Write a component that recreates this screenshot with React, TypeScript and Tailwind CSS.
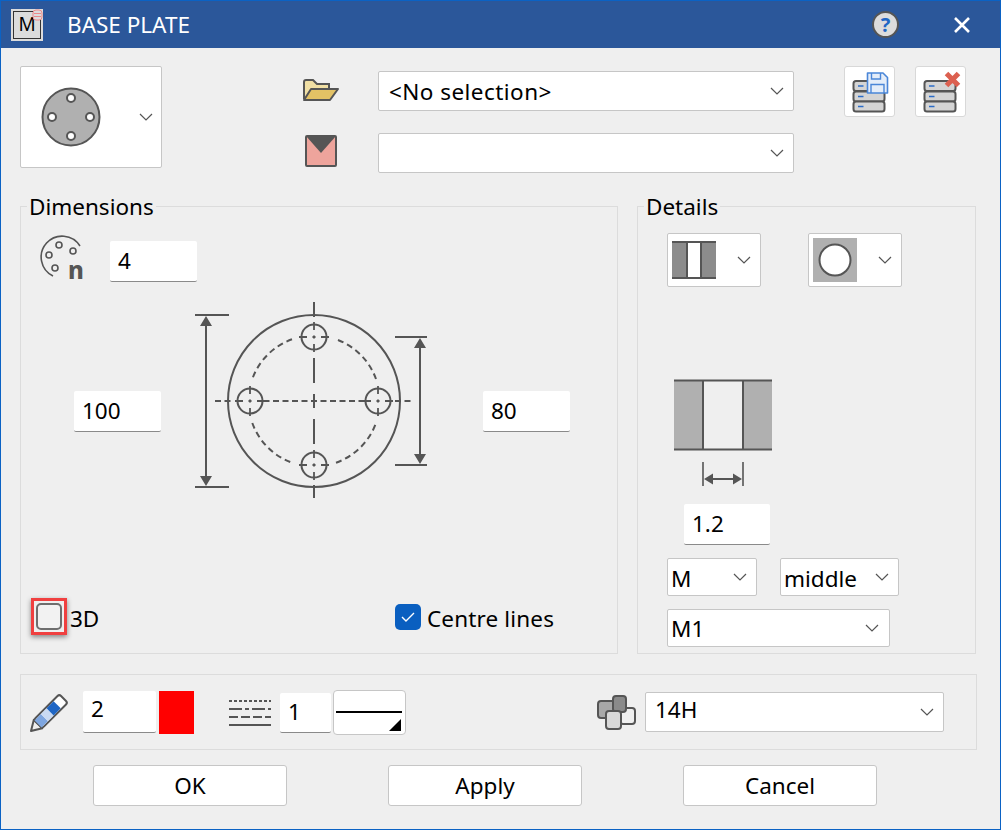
import React from "react";

const font = "font-['Noto_Sans','Open_Sans',sans-serif]";

function Chevron({ className = "" }: { className?: string }) {
  return (
    <svg width="14" height="8" viewBox="0 0 14 8" className={className}>
      <path d="M1 1 L7 7 L13 1" fill="none" stroke="#555" strokeWidth="1.2" />
    </svg>
  );
}

function Field({ value, className = "" }: { value: string; className?: string }) {
  return (
    <div className={`flex shrink-0 items-center rounded-[2px] border-b border-b-[#8a8a8a] bg-white pl-[8px] text-black ${className}`}>
      {value}
    </div>
  );
}

function Combo({
  children,
  className = "",
}: {
  children?: React.ReactNode;
  className?: string;
}) {
  return (
    <div className={`flex shrink-0 items-center justify-between rounded-[2px] border border-[#c6c6c6] bg-white text-black ${className}`}>
      {children}
    </div>
  );
}

function Panel({
  title,
  className = "",
  children,
}: {
  title?: string;
  className?: string;
  children: React.ReactNode;
}) {
  return (
    <div className={`relative shrink-0 border border-[#dcdcdc] ${className}`}>
      {title && (
        <span className="absolute left-[6px] top-[-14px] bg-[#efefef] px-0.5 leading-[28px] text-black">
          {title}
        </span>
      )}
      {children}
    </div>
  );
}

function PlateIcon() {
  return (
    <svg width="60" height="60" viewBox="0 0 60 60">
      <circle cx="30" cy="30" r="28.5" fill="#b0b0b0" stroke="#555" strokeWidth="2" />
      {[[30, 11], [11, 30], [49, 30], [30, 49]].map(([x, y]) => (
        <circle key={`${x}-${y}`} cx={x} cy={y} r="4" fill="#fff" stroke="#555" strokeWidth="2" />
      ))}
    </svg>
  );
}

function StackIcon({ children }: { children: React.ReactNode }) {
  return (
    <svg width="49" height="49" viewBox="0 0 49 49">
      {[14, 24.5, 34.5].map((y) => (
        <g key={y}>
          <rect x="8.5" y={y} width="31" height="10" rx="2.5" fill="#d4d4d4" stroke="#555" strokeWidth="2" />
          <path d={`M13 ${y + 5} H18.5`} stroke="#2b6cc8" strokeWidth="1.5" />
        </g>
      ))}
      {children}
    </svg>
  );
}

function Drawing() {
  const holes = [[134, 42], [70, 106], [198, 106], [134, 170]];
  return (
    <svg width="270" height="210" viewBox="0 0 270 210" className="shrink-0">
      <g fill="none" stroke="#555" strokeWidth="2">
        <circle cx="134" cy="106" r="86" />
        <path
          d="M112 44.3 A65.5 65.5 0 0 0 72.3 84 M196 84 A65.5 65.5 0 0 0 156 44.3 M72.3 128 A65.5 65.5 0 0 0 112 167.7 M156 167.7 A65.5 65.5 0 0 0 196 128"
          strokeDasharray="6 4"
        />
        {holes.map(([x, y]) => (
          <g key={`${x}-${y}`}>
            <circle cx={x} cy={y} r="12.5" />
            <path
              d={`M${x - 15} ${y} H${x + 15} M${x} ${y - 15} V${y + 15}`}
              strokeWidth="1.8"
              strokeDasharray="8 5.5 3 5.5 8"
            />
          </g>
        ))}
        <path d="M35 106 H53 M83.5 106 H184.5 M215 106 H233" strokeDasharray="6 3.5" />
        <path d="M134 7 V22 M134 63 V88 M134 99 V113 M134 124 V149 M134 190 V203" />
        <path d="M15 20 H49 M15 192 H49 M26 24 V188" />
        <path d="M215 42 H247 M215 170 H247 M240 48 V164" />
      </g>
      <g fill="#555">
        <path d="M26 21 L32 31 H20 Z M26 191 L32 181 H20 Z" />
        <path d="M240 43 L246 53 H234 Z M240 169 L246 159 H234 Z" />
      </g>
    </svg>
  );
}

function SectionDrawing() {
  return (
    <svg width="110" height="114" viewBox="0 0 110 114" className="shrink-0">
      <rect x="4" y="4" width="29" height="70" fill="#b0b0b0" />
      <rect x="73" y="4" width="29" height="70" fill="#b0b0b0" />
      <path d="M4 4.5 H102 M4 73.5 H102 M33 4 V74 M73 4 V74" stroke="#555" strokeWidth="2" fill="none" />
      <path d="M33 86 V110 M73 86 V110" stroke="#555" strokeWidth="1.6" />
      <path d="M38 103 H68" stroke="#555" strokeWidth="2" />
      <path d="M34 103 L43 97.5 V108.5 Z M72 103 L63 97.5 V108.5 Z" fill="#555" />
    </svg>
  );
}

function PencilIcon() {
  return (
    <svg width="42" height="42" viewBox="0 0 42 42" className="shrink-0">
      <g transform="translate(2 40) rotate(-45)">
        <path d="M0 0 L10 -6 V6 Z" fill="#efefef" stroke="#555" strokeWidth="2" strokeLinejoin="round" />
        <rect x="10" y="-6" width="36" height="12" rx="2.5" fill="#fff" stroke="#555" strokeWidth="2" />
        <rect x="10" y="-5" width="9" height="10" fill="#7ea6e0" />
        <rect x="19" y="-5" width="8" height="10" fill="#c9daf3" />
        <rect x="27" y="-5" width="10" height="10" fill="#1f66c4" />
      </g>
    </svg>
  );
}

export default function App() {
  return (
    <div className={`flex h-[830px] w-[1001px] flex-col overflow-hidden border border-[#0b62c4] bg-[#efefef] text-[22.5px] ${font}`}>
      {/* title bar */}
      <div className="flex h-[47px] shrink-0 items-center bg-[#2b579a] pl-[10px] text-white">
        <div className="flex h-8 w-8 items-center justify-center bg-[#dcdcdc]">
          <div className="relative flex h-[28px] w-[28px] items-center justify-center border border-[#333] text-[19px] leading-none text-black">
            M
            <svg width="11" height="12" viewBox="0 0 11 12" className="absolute right-[-3px] top-[-3px]">
              <rect x="1" y="1" width="9" height="10" rx="3" fill="#dcdcdc" stroke="#e88" strokeWidth="1" />
              <path d="M2 4.5 H9 M2 7.5 H9" stroke="#e88" />
            </svg>
          </div>
        </div>
        <span className="ml-[24px] text-[22.5px]">BASE PLATE</span>
        <div className="ml-auto flex h-[27px] w-[27px] items-center justify-center rounded-full border-2 border-[#555] bg-[#dcdcdc] text-[20px] font-bold leading-none text-[#1f66c4]">
          ?
        </div>
        <svg width="18" height="18" viewBox="0 0 18 18" className="ml-[54px] mr-[29px]">
          <path d="M2 2 L16 16 M16 2 L2 16" stroke="#fff" strokeWidth="2.6" />
        </svg>
      </div>

      {/* selection row */}
      <div className="flex h-[158px] shrink-0 items-start pl-[19px] pt-[18px]">
        <Combo className="h-[102px] w-[142px] pl-[20px] pr-[8px]">
          <PlateIcon />
          <Chevron />
        </Combo>
        <div className="ml-[141px] flex w-[36px] flex-col items-center">
          <svg width="38" height="24" viewBox="0 0 38 24" className="mt-[12px]">
            <path d="M2 21 V4 Q2 2 4 2 H11 L15 6 H27 V10" fill="#f0dfa4" stroke="#555" strokeWidth="2" />
            <path d="M2 22 L9 11 H36 L28 22 Z" fill="#e3c265" stroke="#555" strokeWidth="2" strokeLinejoin="round" />
          </svg>
          <svg width="32" height="32" viewBox="0 0 32 32" className="mt-[33px]">
            <rect x="1" y="1" width="30" height="30" rx="1" fill="#eea49c" stroke="#555" strokeWidth="2" />
            <path d="M1 1 H31 L16 18 Z" fill="#555" />
          </svg>
        </div>
        <div className="ml-[39px] flex flex-col gap-[22px] pt-[5px]">
          <Combo className="h-[40px] w-[416px] pl-[10px] pr-[9px] tracking-[0.45px]">
            <span className="mt-[2px]">&lt;No selection&gt;</span>
            <Chevron />
          </Combo>
          <Combo className="h-[40px] w-[416px] justify-end pr-[9px]">
            <Chevron />
          </Combo>
        </div>
        <div className="ml-[50px] flex h-[51px] w-[51px] items-center justify-center rounded-[3px] border border-[#d8d8d8] bg-white">
          <StackIcon>
            <path d="M22.5 6 H38 L42.5 10.5 V26 H22.5 Z" fill="#e4edf9" stroke="#4a86d8" strokeWidth="1.6" strokeLinejoin="round" />
            <path d="M26.5 6 V12 H35.5 V6 M26 26 V17.5 H39 V26" fill="none" stroke="#4a86d8" strokeWidth="1.4" />
          </StackIcon>
        </div>
        <div className="ml-[20px] flex h-[51px] w-[51px] items-center justify-center rounded-[3px] border border-[#d8d8d8] bg-white">
          <StackIcon>
            <path d="M30.5 6.5 L42.5 18.5 M42.5 6.5 L30.5 18.5" stroke="#dc6050" strokeWidth="5" />
          </StackIcon>
        </div>
      </div>

      {/* main panels */}
      <div className="flex shrink-0 gap-[19px] pl-[19px]">
        <Panel title="Dimensions" className="h-[448px] w-[598px]">
          <div className="mt-[28px] flex h-[47px] items-start pl-[18px]">
            <svg width="46" height="46" viewBox="0 0 46 46" className="shrink-0 overflow-visible">
              <path d="M14 41 A21 21 0 1 1 41 11" fill="none" stroke="#555" strokeWidth="1.6" />
              <g fill="none" stroke="#555" strokeWidth="1.6">
                <circle cx="20" cy="10" r="3" />
                <circle cx="34" cy="16" r="3" />
                <circle cx="10" cy="20" r="3" />
                <circle cx="16" cy="33" r="3" />
              </g>
              <rect x="27" y="27" width="19" height="19" fill="#efefef" />
              <text x="29" y="44" fontSize="24" fontWeight="800" fill="#555">n</text>
            </svg>
            <Field value="4" className="ml-[25px] mt-[6px] h-[41px] w-[87px]" />
          </div>
          <div className="mt-[13px] flex h-[210px] items-start pl-[53px]">
            <Field value="100" className="mt-[96px] h-[41px] w-[87px]" />
            <div className="ml-[19px]">
              <Drawing />
            </div>
            <Field value="80" className="ml-[33px] mt-[96px] h-[41px] w-[87px]" />
          </div>
          <div className="mt-[93px] flex h-[37px] items-center pl-[10px]">
            <div className="flex h-[37px] w-[36px] items-center justify-center border-[3px] border-[#f04040] bg-[#efefef] shadow-[0_2px_5px_rgba(0,0,0,0.45)]">
              <div className="h-[27px] w-[26px] rounded-[5px] border-2 border-[#6e6e6e] bg-[#f2f2f2]" />
            </div>
            <span className="ml-[3px] mt-[4px] w-[28px] text-black">3D</span>
            <div className="ml-[297px] flex h-[26px] w-[26px] items-center justify-center rounded-[5px] bg-[#0a5fc0]">
              <svg width="16" height="12" viewBox="0 0 16 12">
                <path d="M2 6 L6 10 L14 2" fill="none" stroke="#fff" strokeWidth="1.4" />
              </svg>
            </div>
            <span className="ml-[6px] mt-[4px] tracking-[0.15px] text-black">Centre lines</span>
          </div>
        </Panel>

        <Panel title="Details" className="h-[448px] w-[339px]">
          <div className="mt-[26px] flex gap-[47px] pl-[29px]">
            <Combo className="h-[54px] w-[94px] pl-[4px] pr-[9px]">
              <svg width="44" height="38" viewBox="0 0 44 38">
                <rect x="0" y="0" width="44" height="38" fill="#8c8c8c" />
                <rect x="15" y="2" width="14" height="34" fill="#fff" />
                <path d="M0 1 H44 M0 37 H44 M15 0 V38 M29 0 V38" stroke="#555" strokeWidth="2" />
              </svg>
              <Chevron />
            </Combo>
            <Combo className="h-[54px] w-[94px] pl-[4px] pr-[9px]">
              <svg width="44" height="44" viewBox="0 0 44 44">
                <rect width="44" height="44" fill="#b0b0b0" />
                <circle cx="22" cy="22" r="15.5" fill="#fff" stroke="#555" strokeWidth="2" />
              </svg>
              <Chevron />
            </Combo>
          </div>
          <div className="ml-[32px] mt-[89px]">
            <SectionDrawing />
          </div>
          <Field value="1.2" className="ml-[46px] mt-[14px] h-[41px] w-[86px]" />
          <div className="mt-[13px] flex gap-[23px] pl-[29px]">
            <Combo className="h-[38px] w-[90px] pl-[3px] pr-[9px]">
              <span className="mt-[4px]">M</span>
              <Chevron />
            </Combo>
            <Combo className="h-[38px] w-[119px] pl-[3px] pr-[9px]">
              <span className="mt-[4px]">middle</span>
              <Chevron />
            </Combo>
          </div>
          <Combo className="ml-[29px] mt-[13px] h-[38px] w-[223px] pl-[3px] pr-[10px]">
            <span className="mt-[2px]">M1</span>
            <Chevron />
          </Combo>
        </Panel>
      </div>

      {/* pen row */}
      <Panel className="ml-[19px] mt-[20px] flex h-[76px] w-[957px] items-center pl-[8px]">
        <PencilIcon />
        <Field value="2" className="ml-[12px] h-[42px] w-[73px] pb-[6px]" />
        <div className="ml-[3px] h-[43px] w-[35px] bg-[#ff0000]" />
        <svg width="42" height="28" viewBox="0 0 42 28" className="ml-[35px] mt-[2px] shrink-0">
          <path d="M0 2 H42" stroke="#555" strokeWidth="2" strokeDasharray="3 2" />
          <path d="M0 10 H42" stroke="#555" strokeWidth="2" strokeDasharray="13 3 4 3" />
          <path d="M0 18 H42" stroke="#555" strokeWidth="2" strokeDasharray="9 3" />
          <path d="M0 26 H42" stroke="#555" strokeWidth="2" />
        </svg>
        <Field value="1" className="ml-[9px] mt-[1px] h-[40px] w-[51px]" />
        <div className="relative ml-[2px] h-[45px] w-[73px] rounded-[4px] border border-[#c6c6c6] bg-white">
          <div className="ml-[2px] mt-[20px] h-[2px] w-[66px] bg-black" />
          <div className="absolute bottom-[3px] right-[4px] h-0 w-0 border-b-[12px] border-l-[12px] border-b-black border-l-transparent" />
        </div>
        <svg width="40" height="36" viewBox="0 0 40 36" className="ml-[191px] shrink-0">
          <rect x="1" y="7" width="18" height="17" rx="3" fill="#a8a8a8" stroke="#555" strokeWidth="2" />
          <rect x="23" y="14" width="15" height="16" rx="3" fill="#efefef" stroke="#555" strokeWidth="2" />
          <rect x="16" y="2" width="13" height="16" rx="3" fill="#8a8a8a" stroke="#555" strokeWidth="2" />
          <rect x="9" y="17" width="15" height="18" rx="3" fill="#d8d8d8" stroke="#555" strokeWidth="2" />
        </svg>
        <Combo className="ml-[8px] h-[40px] w-[299px] border-[#8a8a8a] pl-[9px] pr-[9px]">
          <span className="mb-[4px]">14H</span>
          <Chevron />
        </Combo>
      </Panel>

      {/* dialog buttons */}
      <div className="mt-[15px] flex gap-[101px] pl-[92px]">
        {["OK", "Apply", "Cancel"].map((label) => (
          <button
            key={label}
            className="h-[41px] w-[194px] rounded-[3px] border border-[#c6c6c6] bg-white pt-[2px] leading-none text-black"
          >
            {label}
          </button>
        ))}
      </div>
    </div>
  );
}
